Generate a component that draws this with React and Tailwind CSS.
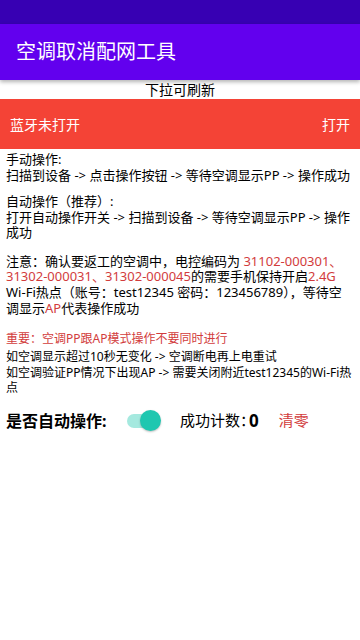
import React from "react";

const font = { fontFamily: '"Noto Sans", "Noto Sans CJK SC", sans-serif' };

function R({ children }) {
  return <span className="text-[#d23c3c]">{children}</span>;
}

export default function App() {
  return (
    <div className="w-[360px] h-[640px] bg-white flex flex-col overflow-hidden" style={font}>
      <div className="h-[24px] bg-[#3700b3] shrink-0" />
      <div className="h-[56px] bg-[#6200ee] shrink-0 flex items-center px-[16px] shadow-[0_2px_4px_rgba(0,0,0,0.3)] relative z-10">
        <span className="text-white text-[20px] leading-none">空调取消配网工具</span>
      </div>
      <div className="h-[19px] flex items-center justify-center text-[14px] text-black leading-none">下拉可刷新</div>
      <div className="h-[50px] bg-[#f44336] flex items-center justify-between px-[10px] text-white text-[14px]">
        <span>蓝牙未打开</span>
        <span>打开</span>
      </div>
      <div className="px-[6px] pt-[2px] text-black">
        <p className="text-[13px] leading-[16px]">
          手动操作:
          <br />
          扫描到设备 -&gt; 点击操作按钮 -&gt; 等待空调显示PP -&gt; 操作成功
        </p>
        <p className="text-[13px] leading-[15.5px] mt-[11px]">
          自动操作（推荐）:
          <br />
          打开自动操作开关 -&gt; 扫描到设备 -&gt; 等待空调显示PP -&gt; 操作成功
        </p>
        <p className="text-[13px] leading-[15.8px] mt-[13px]">
          注意：确认要返工的空调中，电控编码为 <R>31102-000301、31302-000031、31302-000045</R>的需要手机保持开启<R>2.4G</R>
          <br />
          Wi-Fi热点（账号：test12345 密码：123456789），等待空调显示<R>AP</R>代表操作成功
        </p>
        <p className="text-[12px] leading-[15px] mt-[14px] text-[#d23c3c]">重要：空调PP跟AP模式操作不要同时进行</p>
        <p className="text-[12px] leading-[15px] mt-[3px]">如空调显示超过10秒无变化 -&gt; 空调断电再上电重试</p>
        <p className="text-[12px] leading-[15.5px] mt-[1px]">如空调验证PP情况下出现AP -&gt; 需要关闭附近test12345的Wi-Fi热点</p>
        <div className="flex items-center mt-[10px] h-[30px]">
          <span className="text-[16px] font-bold w-[118px]">是否自动操作:</span>
          <div className="relative w-[44px] h-[24px] flex items-center">
            <div className="absolute left-[3px] w-[33px] h-[14px] rounded-full bg-[#a5e9df]" />
            <div className="absolute left-[16px] w-[21px] h-[21px] rounded-full bg-[#1fc7b0] shadow-[0_1px_2px_rgba(0,0,0,0.25)]" />
          </div>
          <span className="ml-[12px] text-[15px]">成功计数：</span>
          <span className="text-[17px] font-bold ml-[-6px]">0</span>
          <span className="ml-[20px] text-[15px] text-[#d23c3c]">清零</span>
        </div>
      </div>
    </div>
  );
}
